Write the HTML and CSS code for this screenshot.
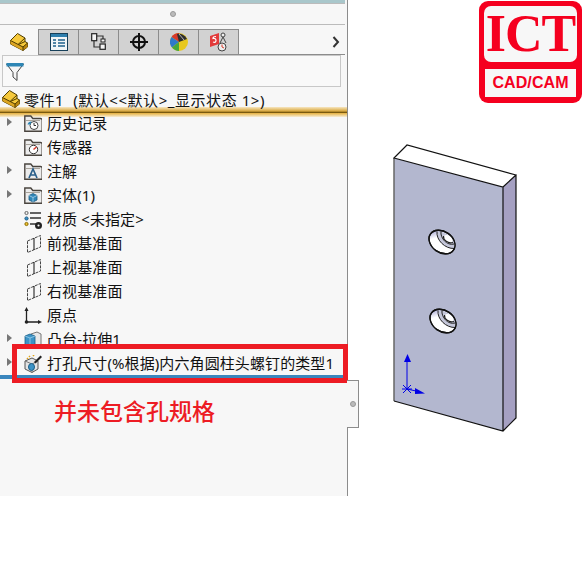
FILE: index.html
```html
<!DOCTYPE html>
<html lang="zh-CN">
<head>
  <meta charset="UTF-8">
  <title>零件1 特征树</title>
  <link rel="stylesheet" href="styles.css">
</head>
<body>

<svg class="defs" width="0" height="0">
  <defs>
    <symbol id="part" viewBox="0 0 18 18">
      <path d="M.5 7.500 7.500.5 15 5v3.500l2.500 1.500v4L13 17.500.5 11z" fill="#f6c93c" stroke="#4f3c00" stroke-width="1" stroke-linejoin="round"/>
      <path d="M.5 7.500 13 14v3.500L.5 11z" fill="#dca522"/>
      <path d="M13 14l4.500-4v4L13 17.500z" fill="#b98510"/>
      <path d="M.5 7.500 13 14l4.500-4M13 14v3.500M8 11.500 15 5M8.500 11.500 15 8.500" fill="none" stroke="#4f3c00" stroke-width="1"/>
    </symbol>
    <symbol id="folder" viewBox="0 0 18 17">
      <path d="M.8 16.200V1h6l2 2.500h7.700q1.700 0 1.700 1.700v11z" fill="#ececec" stroke="#4a453f" stroke-width="1.400"/>
      <path d="M2 5.500h14" stroke="#a8a39b"/>
    </symbol>
    <symbol id="plane" viewBox="0 0 14 18">
      <path d="M.5 6 13.500.5v11.500L.5 17.500z" fill="none" stroke="#444" stroke-dasharray="3 1"/>
      <path d="M7 3v12" stroke="#111" stroke-width="1"/>
    </symbol>
  </defs>
</svg>

<div class="page">

  <!-- Feature manager -->
  <section class="panel">
    <div class="rule-top"></div>
    <div class="grip"><span class="dot"></span></div>

    <div class="tabs">
      <div class="tab tab-on">
        <svg width="18" height="18"><use href="#part"/></svg>
      </div>
      <div class="tab">
        <svg width="18" height="18" viewBox="0 0 18 18">
          <rect x=".5" y=".5" width="17" height="17" fill="#f2f6f8" stroke="#17405a"/>
          <rect x="1" y="1" width="16" height="3" fill="#2e7fae"/>
          <path d="M3 7h3M8 7h7M3 10h3M8 10h7M3 13h3M8 13h7" stroke="#1f628c" stroke-width="1.500"/>
        </svg>
      </div>
      <div class="tab">
        <svg width="15" height="18" viewBox="0 0 15 18">
          <path d="M3 8v6h6M6 3h6v5" fill="none" stroke="#333" stroke-width="1.200"/>
          <rect x=".7" y=".7" width="5" height="7" fill="#f4f4f4" stroke="#222" stroke-width="1.200"/>
          <rect x="9" y="11" width="5.300" height="5.300" fill="#f4f4f4" stroke="#222" stroke-width="1.200"/>
          <rect x="10" y="6" width="4" height="3" fill="#f4f4f4" stroke="#222"/>
        </svg>
      </div>
      <div class="tab">
        <svg width="18" height="18" viewBox="0 0 18 18">
          <circle cx="9" cy="9" r="6" fill="none" stroke="#111" stroke-width="2"/>
          <path d="M9 0v18M0 9h18" stroke="#111" stroke-width="2"/>
        </svg>
      </div>
      <div class="tab">
        <svg width="18" height="18" viewBox="0 0 18 18">
          <circle cx="9" cy="9" r="9" fill="#e8c81e"/>
          <path d="M9 9 1.500 4A9 9 0 0 1 9 0z" fill="#d8392b"/>
          <path d="M9 9 1.500 4A9 9 0 0 0 2 14.500z" fill="#2f79c9"/>
          <path d="M9 9 2 14.500A9 9 0 0 0 9 18z" fill="#47a83a"/>
          <path d="M9 9 7 1a9 9 0 0 1 10 5z" fill="#2e2e2e"/>
          <path d="M9 1l5 6" stroke="#b8b8b8" stroke-width="1"/>
        </svg>
      </div>
      <div class="tab">
        <svg width="20" height="20" viewBox="0 0 20 20">
          <path d="M1 4l9-3v11l-9 3z" fill="#e23a3a"/>
          <path d="M4 10q3 1 3-1.500T4 6.500q0-2 3-2" fill="none" stroke="#fff" stroke-width="1.200"/>
          <circle cx="14" cy="3" r="2" fill="#eee" stroke="#444"/>
          <path d="M11 11l3-6 3 6" fill="none" stroke="#444"/>
          <circle cx="13" cy="15" r="4" fill="#eee" stroke="#444"/>
          <path d="M13 12.500V15l2 1" fill="none" stroke="#d8392b"/>
        </svg>
      </div>
      <div class="tab-rest">
        <svg width="8" height="12" viewBox="0 0 8 12"><path d="M1.500 1 6 6l-4.500 5" fill="none" stroke="#333" stroke-width="2"/></svg>
      </div>
    </div>

    <div class="filter">
      <svg width="18" height="19" viewBox="0 0 18 19">
        <path d="M.5 2h17L11 10.500V18.500L7 15v-4.500z" fill="#f5f5f5" stroke="#444"/>
        <path d="M.5 1h17v3.500H.5z" fill="#2e86b5"/>
      </svg>
    </div>

    <div class="root">
      <svg width="18" height="18"><use href="#part"/></svg>
      <span>零件1&nbsp; (默认&lt;&lt;默认&gt;_显示状态 1&gt;)</span>
    </div>
    <div class="rollback"></div>

    <ul class="tree">
      <li class="row has-kids">
        <svg class="ico" width="18" height="17" viewBox="0 0 18 17">
          <use href="#folder" width="18" height="17"/>
          <circle cx="10" cy="10.500" r="4" fill="#fff" stroke="#444"/>
          <path d="M10 8v2.500h2" fill="none" stroke="#333"/>
          <path d="M3.500 9.500a4 4 0 0 1 4-3l-1 3z" fill="#2e86b5"/>
        </svg>
        <span>历史记录</span>
      </li>
      <li class="row">
        <svg class="ico" width="18" height="17" viewBox="0 0 18 17">
          <use href="#folder" width="18" height="17"/>
          <circle cx="9.500" cy="10.500" r="4.200" fill="#fff" stroke="#333"/>
          <path d="M9.500 10.500l3-2.500" stroke="#d8392b" stroke-width="1.600"/>
        </svg>
        <span>传感器</span>
      </li>
      <li class="row has-kids">
        <svg class="ico" width="18" height="17" viewBox="0 0 18 17">
          <use href="#folder" width="18" height="17"/>
          <path d="M5 15 9 6l4 9M6.500 12h5" fill="none" stroke="#2a5f8a" stroke-width="1.700"/>
        </svg>
        <span>注解</span>
      </li>
      <li class="row has-kids">
        <svg class="ico" width="18" height="17" viewBox="0 0 18 17">
          <use href="#folder" width="18" height="17"/>
          <path d="M9 6.500l4 2v4.500l-4 2-4-2V8.500z" fill="#2f86b8" stroke="#1b5a80" stroke-width=".8"/>
          <path d="M5 8.500l4 2 4-2M9 10.500V15" fill="none" stroke="#bfe0f2" stroke-width=".7"/>
        </svg>
        <span>实体(1)</span>
      </li>
      <li class="row">
        <svg class="ico" width="18" height="18" viewBox="0 0 18 18">
          <path d="M6 2h11M6 7h11M6 13h6" stroke="#333" stroke-width="1.600"/>
          <circle cx="2.500" cy="2" r="1.600" fill="#eee" stroke="#666"/>
          <circle cx="2.500" cy="7.500" r="1.600" fill="#3b8fc4" stroke="#1f5f88"/>
          <circle cx="2.500" cy="13" r="1.600" fill="#f0c030" stroke="#8a6d00"/>
          <circle cx="14.500" cy="14.500" r="2.300" fill="none" stroke="#222" stroke-width="2.400"/>
        </svg>
        <span>材质 &lt;未指定&gt;</span>
      </li>
      <li class="row"><svg class="ico ico-plane" width="14" height="18"><use href="#plane"/></svg><span>前视基准面</span></li>
      <li class="row"><svg class="ico ico-plane" width="14" height="18"><use href="#plane"/></svg><span>上视基准面</span></li>
      <li class="row"><svg class="ico ico-plane" width="14" height="18"><use href="#plane"/></svg><span>右视基准面</span></li>
      <li class="row">
        <svg class="ico" width="18" height="18" viewBox="0 0 18 18">
          <path d="M2.500 2v13H16" fill="none" stroke="#222" stroke-width="1.300"/>
          <path d="M2.500 0 .5 4h4zM18 15l-4-2v4z" fill="#222"/>
          <circle cx="2.500" cy="15" r="1.800" fill="#222"/>
        </svg>
        <span>原点</span>
      </li>
      <li class="row has-kids">
        <svg class="ico" width="18" height="18" viewBox="0 0 18 18">
          <path d="M7 3l6-2 4 2v12l-6 2z" fill="#e8e8e8" stroke="#777"/>
          <path d="M1 5l5-2 5 2v11l-5 2-5-2z" fill="#3c93c6" stroke="#1c5f88" stroke-width=".8"/>
          <path d="M1 5l5 2 5-2M6 7v11" fill="none" stroke="#9fd0ea" stroke-width=".8"/>
        </svg>
        <span>凸台-拉伸1</span>
      </li>
      <li class="row has-kids">
        <svg class="ico" width="18" height="18" viewBox="0 0 18 18">
          <path d="M1 6l7-3 6 3v8l-6 3.500L1 14z" fill="#e4e4e4" stroke="#555"/>
          <path d="M1 6l7 3 6-3M8 9v8.500" fill="none" stroke="#777"/>
          <ellipse cx="7.500" cy="12" rx="3" ry="3.500" fill="#3c93c6" stroke="#1c5f88"/>
          <path d="M10 7l6.500-6.500L18 2l-6.500 6.500z" fill="#222"/>
          <path d="M5 1l1 1M9 0l1 1M3 3l1 1" stroke="#e2a416" stroke-width="1.600"/>
        </svg>
        <span>打孔尺寸(%根据)内六角圆柱头螺钉的类型1</span>
      </li>
    </ul>
    <div class="rule-blue"></div>

    <!-- callout drawn over the last row -->
    <div class="callout"></div>
    <p class="note">并未包含孔规格</p>

    <div class="handle"><span class="dot"></span></div>
  </section>

  <!-- Graphics area -->
  <section class="view">
    <svg class="model" width="235" height="566" viewBox="348 0 235 566">
      <defs>
        <linearGradient id="bore" x1="0" y1="0" x2="1" y2=".6">
          <stop offset="0" stop-color="#7f7fc0"/>
          <stop offset=".4" stop-color="#fff"/>
        </linearGradient>
        <g id="hole">
          <ellipse rx="14" ry="10.500" transform="rotate(35)" fill="url(#bore)" stroke="#111" stroke-width="1.300"/>
          <path d="M-5-10.500C-6-2 3 7 12.500 6.500 14 3 12-2 8-6 3-10-2-11-5-10.500z" fill="#c5c7da"/>
          <path d="M-5-10.500C-6-2 3 7 12.500 6.500" fill="none" stroke="#222" stroke-width="1"/>
          <path d="M-1-10.500C-2-4 5 4 12 2" fill="none" stroke="#222" stroke-width="1"/>
          <ellipse cx="6" cy="-3" rx="5" ry="3.500" transform="rotate(35 6 -3)" fill="#fff"/>
          <path d="M1.500-6C1-2 6 2 11 .5" fill="none" stroke="#222" stroke-width="1.200"/>
          <ellipse rx="14" ry="10.500" transform="rotate(35)" fill="none" stroke="#111" stroke-width="1.300"/>
        </g>
      </defs>
      <path d="M394 158 503 187V431L394 401z" fill="#b3b7cf"/>
      <path d="M503 187 516 175V418L503 431z" fill="#a5a0c2"/>
      <path d="M394 158 407 145 516 175 503 187z" fill="#fff"/>
      <path d="M394 158V401" stroke="#666" stroke-width="1.500"/>
      <path d="M394 158 407 145 516 175 503 187zM394 401 503 431 516 418V175M503 187V431" fill="none" stroke="#111" stroke-width="1.200"/>
      <use href="#hole" x="442" y="242"/>
      <use href="#hole" x="443" y="321"/>
      <!-- triad -->
      <path d="M407 360V389L416 391M403 385l8 8M403 393l8-8M402 389h10" fill="none" stroke="#0000e6" stroke-width="1"/>
      <path d="M407.500 354 404 362h7zM415 388l10 5.500-10 .5z" fill="#0000e6"/>
    </svg>

    <div class="logo">
      <div class="logo-top">ICT</div>
      <div class="logo-bot">CAD/CAM</div>
    </div>
  </section>

</div>

</body>
</html>
```

FILE: styles.css
```css
html, body {
  margin: 0;
  padding: 0;
  background: #fff;
}

body {
  font-family: "Noto Sans", "Noto Sans CJK SC", sans-serif;
  font-size: 15px;
  letter-spacing: .1px;
  color: #111;
  overflow: hidden;
}

.defs {
  display: block;
  height: 0;
}

.page {
  display: flex;
  width: 583px;
  height: 566px;
}

/* left panel */
.panel {
  position: relative;
  box-sizing: border-box;
  width: 348px;
  height: 496px;
  background: #f7f7f7;
  border-right: 1px solid #8c8c8c;
  flex: none;
}

.rule-top {
  height: 3px;
  margin-right: 2px;
  background: #a9c7cb;
  border-bottom: 1px solid #bbb;
}

.grip {
  height: 20px;
  margin-right: 2px;
  border-bottom: 1px solid #bbb;
  display: flex;
  align-items: center;
  justify-content: center;
}

.dot {
  width: 6px;
  height: 6px;
  border-radius: 50%;
  background: #bbb;
  border: 1px solid #999;
  box-sizing: border-box;
}

.tabs {
  box-sizing: border-box;
  display: flex;
  height: 26px;
  margin-top: 4px;
  border-bottom: 1px solid #8c8c8c;
  margin-right: 2px;
}

.tab {
  box-sizing: border-box;
  width: 40px;
  height: 25px;
  background: #d2d2d2;
  border: 1px solid #8c8c8c;
  border-left: 0;
  border-bottom: 0;
  display: flex;
  align-items: center;
  justify-content: center;
}

.tab-on {
  width: 39px;
  background: #f7f7f7;
  border-top: 0;
  height: 26px;
}

.tab-rest {
  flex: 1;
  display: flex;
  align-items: center;
  justify-content: flex-end;
  padding-right: 5px;
}

.filter {
  box-sizing: border-box;
  height: 32px;
  margin: 0 6px 0 2px;
  border: 1px solid #c8c8c8;
  background: #f9f9f9;
  display: flex;
  align-items: center;
  padding-left: 3px;
}

.root {
  height: 24px;
  margin-bottom: -4px;
  display: flex;
  align-items: center;
  gap: 4px;
  padding-left: 2px;
  white-space: nowrap;
  letter-spacing: .55px;
}

.rollback {
  height: 10px;
  margin-bottom: -7px;
  background: linear-gradient(#f7e6c0, #d9a83e 40%, #7a5a10 55%, #e8b850 65%, #f7ecd4);
}

.tree {
  list-style: none;
  margin: 0;
  padding: 0;
}

.row {
  position: relative;
  height: 24px;
  display: flex;
  align-items: center;
  padding-left: 24px;
  white-space: nowrap;
}

.row .ico {
  flex: none;
  margin-top: 3px;
  margin-right: 5px;
}

.row .ico-plane {
  margin-left: 3px;
  margin-right: 6px;
}

.has-kids::before {
  content: "";
  position: absolute;
  left: 7px;
  top: 8px;
  border-left: 5px solid #777;
  border-top: 4px solid transparent;
  border-bottom: 4px solid transparent;
}

.rule-blue {
  height: 4px;
  margin-top: 1px;
  margin-right: 2px;
  background: #3a86bd;
}

.callout {
  position: absolute;
  left: 12px;
  top: 344px;
  width: 326px;
  height: 29px;
  border: 5px solid #ed1c24;
}

.note {
  position: absolute;
  left: 54px;
  top: 394px;
  margin: 0;
  font-size: 23px;
  line-height: 34px;
  font-weight: 500;
  letter-spacing: 0;
  color: #ed1c24;
}

.handle {
  position: absolute;
  left: 347px;
  top: 380px;
  box-sizing: border-box;
  width: 12px;
  height: 48px;
  background: #f7f7f7;
  border: 1px solid #8c8c8c;
  border-left: 0;
  display: flex;
  align-items: center;
  justify-content: center;
}

/* right side */
.view {
  position: relative;
  flex: 1;
  height: 566px;
}

.model {
  display: block;
}

.logo {
  position: absolute;
  left: 131px;
  top: 1px;
  width: 103px;
  height: 102px;
  box-sizing: border-box;
  padding: 5px 5px 6px;
  background: #f5001f;
  border-radius: 9px;
  display: flex;
  flex-direction: column;
  gap: 7px;
  font-weight: bold;
  color: #f5001f;
}

.logo-top {
  height: 56px;
  background: #f7f7f7;
  border-radius: 7px;
  font-family: "Liberation Serif", serif;
  font-size: 52px;
  line-height: 56px;
  letter-spacing: -1px;
  text-align: center;
}

.logo-bot {
  height: 28px;
  margin: 0 1px;
  background: #f7f7f7;
  font-family: "Liberation Sans", sans-serif;
  font-size: 16px;
  line-height: 28px;
  text-align: center;
}
```
